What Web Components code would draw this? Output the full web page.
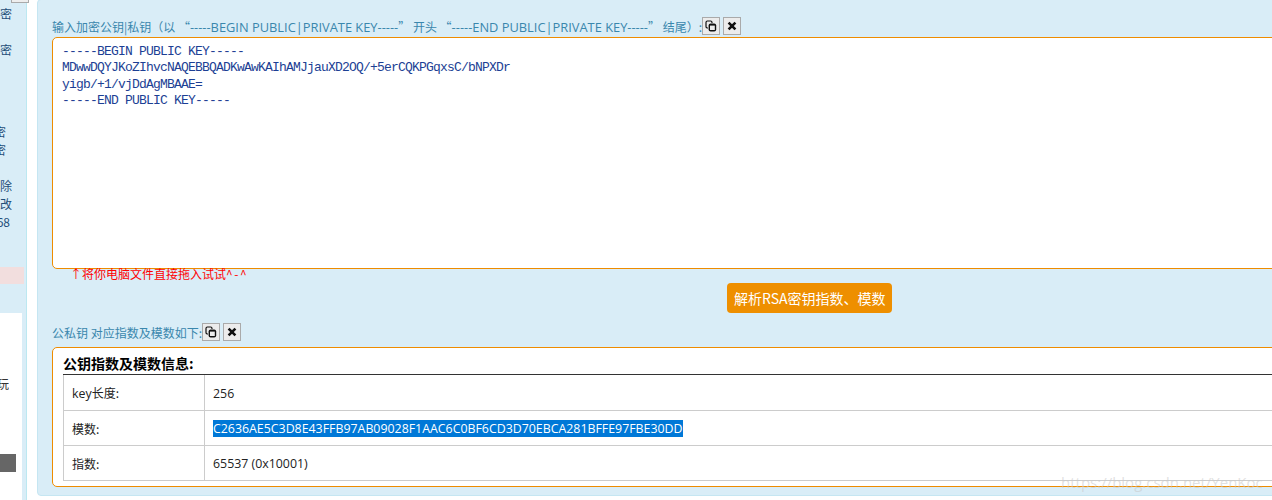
<!DOCTYPE html>
<html>
<head>
<meta charset="utf-8">
<style>
  html, body { margin: 0; height: 500px; overflow: hidden; background: #fff; }
  body { font-family: "Noto Sans CJK SC", sans-serif; }
  .page { display: flex; height: 500px; width: 1272px; overflow: hidden; position: relative; }
  .lat { font: 12.85px "Open Sans", sans-serif; }
</style>
</head>
<body>
<div class="page">
  <side-bar></side-bar>
  <main-panel>
    <icon-label>输入加密公钥|私钥（以 “<span class="lat">-----BEGIN PUBLIC|PRIVATE KEY-----</span>” 开头 “<span class="lat">-----END PUBLIC|PRIVATE KEY-----</span>” 结尾）:</icon-label>
    <key-input></key-input>
    <div slot="hint">↑将你电脑文件直接拖入试试<span style="letter-spacing:1.6px">^-^</span></div>
    <parse-button slot="action">解析RSA密钥指数、模数</parse-button>
    <icon-label slot="result-label">公私钥 对应指数及模数如下:</icon-label>
    <result-box slot="result"></result-box>
  </main-panel>
  <water-mark>https://blog.csdn.net/YenKoc</water-mark>
</div>

<script>
class SideBar extends HTMLElement {
  constructor() {
    super();
    this.attachShadow({ mode: "open" });
    this.shadowRoot.innerHTML = /* html */`
    <style>
      :host {
        display: block;
        flex: none;
        width: 37px;
        height: 500px;
        font: 12px/18px "Noto Sans CJK SC", sans-serif;
        color: #1f4e79;
      }
      .col {
        width: 26px;
        height: 500px;
        background: #d9edf7;
        border-right: 1px solid #bce8f1;
        display: flex;
        flex-direction: column;
      }
      .tab {
        width: 16px;
        height: 2px;
        margin-left: 11px;
        border: 1px solid #aaa;
        border-top: 0;
        background: #eee;
        flex: none;
      }
      .row { height: 18px; flex: none; white-space: nowrap; overflow: hidden; width: 12px; text-align: right; direction: rtl; }
      .gap { flex: none; }
      .pink { height: 17px; width: 24px; background: #f2dede; flex: none; margin-top: 36px; }
      .card {
        width: 22px;
        height: 188px;
        margin-top: 29px;
        background: #fff;
        flex: none;
        display: flex;
        flex-direction: column;
        color: #333;
      }
      .card .row { margin-top: 62px; width: 9px; }
      .dark { width: 16px; height: 18px; background: #666; margin-top: 61px; }
    </style>
    <div class="col">
      <div class="tab"></div>
      <div class="row" style="margin-top:2px">密</div>
      <div class="gap" style="height:18px"></div>
      <div class="row">密</div>
      <div class="gap" style="height:64px"></div>
      <div class="row" style="width:6px">密</div>
      <div class="row" style="width:6px">密</div>
      <div class="gap" style="height:18px"></div>
      <div class="row">除</div>
      <div class="row">改</div>
      <div class="row" style="width:10px">68</div>
      <div class="pink"></div>
      <div class="card">
        <div class="row">玩</div>
        <div class="dark"></div>
      </div>
    </div>`;
  }
}

class MainPanel extends HTMLElement {
  constructor() {
    super();
    this.attachShadow({ mode: "open" });
    this.shadowRoot.innerHTML = /* html */`
    <style>
      :host {
        display: block;
        flex: none;
        width: 1560px;
        height: 477px;
        margin-top: -1px;
        padding: 17px 0 1px 14px;
        box-sizing: content-box;
        background: #d9edf7;
        border: 1px solid #c5e6f2;
        border-radius: 4px;
      }
      .hint { height: 17px; margin: -4px 0 0 18px; }
      ::slotted([slot="hint"]) {
        font: 12px/17px "Noto Sans CJK SC", sans-serif;
        color: #f00;
      }
      .action { display: flex; justify-content: center; width: 1515px; margin-top: 1px; }
      .label { margin-top: 10px; }
      .result { margin-top: 5px; }
    </style>
    <slot></slot>
    <div class="hint"><slot name="hint"></slot></div>
    <div class="action"><slot name="action"></slot></div>
    <div class="label"><slot name="result-label"></slot></div>
    <div class="result"><slot name="result"></slot></div>`;
  }
}

class IconLabel extends HTMLElement {
  constructor() {
    super();
    this.attachShadow({ mode: "open" });
    this.shadowRoot.innerHTML = /* html */`
    <style>
      :host {
        display: flex;
        align-items: flex-start;
        height: 19px;
        white-space: nowrap;
        font: 12px/19px "Noto Sans CJK SC", sans-serif;
        color: #3a87ad;
      }
      button {
        all: unset;
        box-sizing: border-box;
        width: 18px;
        height: 18px;
        margin-right: 3px;
        border: 1px solid #aaa;
        background: #ececec;
        display: flex;
        align-items: center;
        justify-content: center;
      }
      svg { display: block; }
    </style>
    <span><slot></slot></span>
    <button><svg width="12" height="12" viewBox="0 0 12 12" fill="none" stroke="#111" stroke-width="1.2"><path d="M3 8H2.2A1.4 1.4 0 0 1 1 6.6V2.4A1.4 1.4 0 0 1 2.4 1h3.2A1.4 1.4 0 0 1 7 2.4V3"/><rect x="3.6" y="3.4" width="7.6" height="8" rx="2" fill="#111" stroke="none"/><rect x="5" y="5.6" width="4.8" height="4.4" fill="#ececec" stroke="none"/></svg></button>
    <button><svg width="10" height="10" viewBox="0 0 10 10" stroke="#111" stroke-width="2.6"><path d="M1.6 1.6l6.8 6.8M8.4 1.6l-6.8 6.8"/></svg></button>`;
  }
}

class KeyInput extends HTMLElement {
  constructor() {
    super();
    this.attachShadow({ mode: "open" });
    this.shadowRoot.innerHTML = /* html */`
    <style>
      :host {
        display: block;
        box-sizing: border-box;
        width: 1300px;
        height: 232px;
        margin-top: 1px;
        padding: 6px 9px;
        background: #fff;
        border: 1px solid #ee8c00;
        border-radius: 5px;
      }
      pre {
        margin: 0;
        font: 13px/16.3px "Liberation Mono", monospace;
        letter-spacing: -0.8px;
        color: #1c3f94;
      }
    </style>
    <pre>-----BEGIN PUBLIC KEY-----
MDwwDQYJKoZIhvcNAQEBBQADKwAwKAIhAMJjauXD2OQ/+5erCQKPGqxsC/bNPXDr
yigb/+1/vjDdAgMBAAE=
-----END PUBLIC KEY-----</pre>`;
  }
}

class ParseButton extends HTMLElement {
  constructor() {
    super();
    this.attachShadow({ mode: "open" });
    this.shadowRoot.innerHTML = /* html */`
    <style>
      :host {
        display: block;
        height: 30px;
        width: 151px;
        padding: 0 7px;
        background: #ee8f00;
        border-radius: 4px;
        color: #fff;
        font: 14px/30px "Noto Sans CJK SC", sans-serif;
        white-space: nowrap;
      }
    </style>
    <slot></slot>`;
  }
}

class ResultBox extends HTMLElement {
  constructor() {
    super();
    this.attachShadow({ mode: "open" });
    this.shadowRoot.innerHTML = /* html */`
    <style>
      :host {
        display: block;
        box-sizing: border-box;
        width: 1300px;
        height: 140px;
        padding: 6px 10px 0;
        background: #fff;
        border: 1px solid #ee8c00;
        border-radius: 5px;
        font: 12px "Noto Sans CJK SC", sans-serif;
        color: #222;
      }
      .title {
        font-weight: 700;
        font-size: 14px;
        line-height: 19px;
        padding-bottom: 1px;
        color: #000;
        border-bottom: 1px solid #333;
      }
      table { width: 100%; border-collapse: collapse; table-layout: fixed; }
      td { height: 35px; padding: 2px 8px 0; border: 1px solid #ccc; box-sizing: border-box; }
      td:first-child { width: 141px; }
      td + td { font: 12.37px "Open Sans", sans-serif; }
      .k { font: 12.37px "Open Sans", sans-serif; }
      .sel { background: #0078d7; color: #fff; }
      tr:first-child td { border-top: 0; }
    </style>
    <div class="title">公钥指数及模数信息:</div>
    <table>
      <tr><td><span class="k">key</span>长度:</td><td>256</td></tr>
      <tr><td>模数:</td><td><span class="sel">C2636AE5C3D8E43FFB97AB09028F1AAC6C0BF6CD3D70EBCA281BFFE97FBE30DD</span></td></tr>
      <tr><td>指数:</td><td>65537 (0x10001)</td></tr>
    </table>`;
  }
}

class WaterMark extends HTMLElement {
  constructor() {
    super();
    this.attachShadow({ mode: "open" });
    this.shadowRoot.innerHTML = /* html */`
    <style>
      :host {
        position: absolute;
        left: 1061px;
        top: 472px;
        font: 15px/20px "Open Sans", sans-serif;
        color: rgba(200, 200, 200, 0.55);
        white-space: nowrap;
      }
    </style>
    <slot></slot>`;
  }
}

customElements.define("side-bar", SideBar);
customElements.define("main-panel", MainPanel);
customElements.define("icon-label", IconLabel);
customElements.define("key-input", KeyInput);
customElements.define("parse-button", ParseButton);
customElements.define("result-box", ResultBox);
customElements.define("water-mark", WaterMark);
</script>
</body>
</html>
